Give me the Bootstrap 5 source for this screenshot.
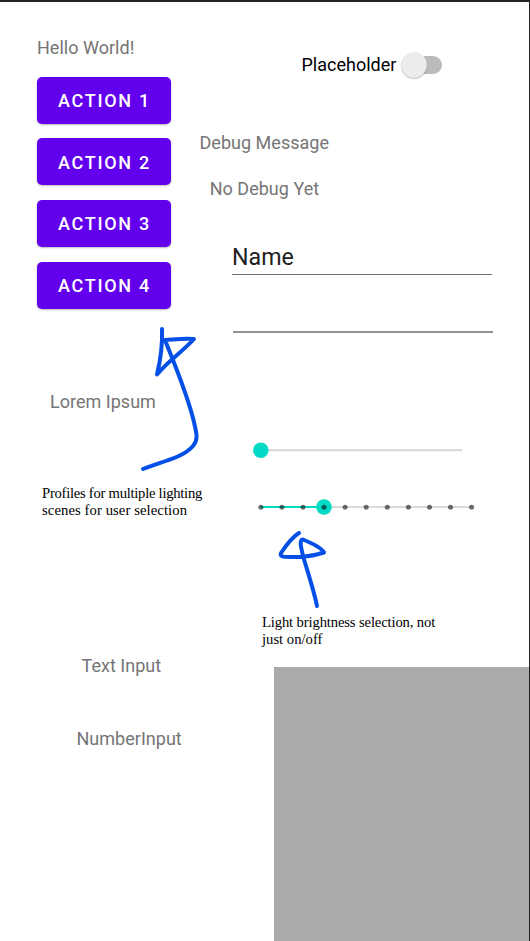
<!DOCTYPE html>
<html lang="en">
<head>
<meta charset="utf-8">
<meta name="viewport" content="width=device-width, initial-scale=1">
<title>Lighting control</title>
<link href="https://cdn.jsdelivr.net/npm/bootstrap@5.3.0/dist/css/bootstrap.min.css" rel="stylesheet">
<style>
body { background: #fff; font-family: Roboto, sans-serif; }
.screen { width: 530px; height: 941px; border-top: 2px solid #222; border-right: 1px solid #222; }
.side { width: 200px; flex: none; padding: 34px 0 0 37px; }
.main { padding-top: 50px; min-width: 0; }
.label { font-size: 18px; line-height: 24px; letter-spacing: .02px; color: #757575; white-space: nowrap; }
.actions { margin-top: 16.500px; gap: 14.700px; width: 134px; }
.btn-action { --bs-btn-color: #fff; --bs-btn-bg: #6200ee; --bs-btn-hover-bg: #5400d0; --bs-btn-hover-color: #fff;
  height: 47px; border: 0; border-radius: 5px; font-size: 18px; font-weight: 500; letter-spacing: 1.700px; line-height: 24px;
  padding: 8px 0 6px 1px; box-shadow: 0 1px 2px rgba(0,0,0,.28); white-space: nowrap; }
.lorem { margin: 81px 0 0 13px; }
.note { font-family: "Liberation Serif", serif; font-size: 14.670px; line-height: 17px; color: #000; white-space: nowrap; }
.note-profiles { margin: 71px 0 0 5px; }
.tight { letter-spacing: -.270px; }
.snug { letter-spacing: -.140px; }
.loose { letter-spacing: .090px; }
.text-in { margin: 135px 0 0 44.500px; }
.number-in { margin: 49px 0 0 39.500px; }
.toggle-row { margin-left: 101.500px; height: 26px; gap: 5px; }
.toggle-row .label { color: #000; letter-spacing: 0; }
.debug { margin-top: 53px; margin-left: -.500px; }
.nodebug { margin: 22px 0 0 9.700px; }
.field { width: 260px; border-bottom: 1px solid #707070; font-size: 23.200px; line-height: 32px; color: #212121; }
.field-name { margin: 40px 0 0 32px; height: 34px; }
.field-empty { margin: 29px 0 0 33px; height: 29px; border-bottom: 2px solid #929292; }
.sliders { display: block; margin: 108px 0 0 50px; }
.note-light { margin: 94px 0 0 62px; }
.panel { margin: 19px 0 0 74px; background: #aaa; }
.pen { left: 0; top: 0; pointer-events: none; }
</style>
</head>
<body>
<div class="screen position-relative d-flex overflow-hidden">
  <div class="side d-flex flex-column">
    <div class="label">Hello World!</div>
    <div class="actions d-flex flex-column">
      <button class="btn btn-action">ACTION 1</button>
      <button class="btn btn-action">ACTION 2</button>
      <button class="btn btn-action">ACTION 3</button>
      <button class="btn btn-action">ACTION 4</button>
    </div>
    <div class="label lorem">Lorem Ipsum</div>
    <div class="note note-profiles"><span class="tight">Profiles for multiple lighting</span><br><span class="loose">scenes for user selection</span></div>
    <div class="label text-in">Text Input</div>
    <div class="label number-in">NumberInput</div>
  </div>
  <div class="main d-flex flex-column flex-grow-1">
    <div class="toggle-row d-flex align-items-center">
      <span class="label">Placeholder</span>
      <svg width="44" height="30" viewBox="0 0 44 30" overflow="visible">
        <rect x="2" y="6" width="39" height="18" rx="9" fill="#bababa"/>
        <circle cx="13" cy="16" r="13.400" fill="#000" opacity=".09"/>
        <circle cx="13" cy="15.700" r="13" fill="#000" opacity=".12"/>
        <circle cx="13" cy="14.800" r="12.900" fill="#ececec"/>
      </svg>
    </div>
    <div class="label debug">Debug Message</div>
    <div class="label nodebug">No Debug Yet</div>
    <div class="field field-name">Name</div>
    <div class="field field-empty"></div>
    <svg class="sliders" width="232" height="79" viewBox="0 0 232 79">
      <path d="M11 9.200H212M74 66H221.500" stroke="#dadada" stroke-width="2.200"/>
      <circle cx="10.800" cy="9.300" r="7.800" fill="#03dac5"/>
      <path d="M11 66H74" stroke="#03dac5" stroke-width="2.200"/>
      <circle cx="74" cy="66" r="7.800" fill="#03dac5"/>
      <g fill="#000" fill-opacity=".56">
        <circle cx="10.800" cy="66.200" r="2.500"/><circle cx="31.900" cy="66.200" r="2.500"/><circle cx="53" cy="66.200" r="2.500"/>
        <circle cx="74.100" cy="66.200" r="2.500"/><circle cx="95.100" cy="66.200" r="2.500"/><circle cx="116.200" cy="66.200" r="2.500"/>
        <circle cx="137.300" cy="66.200" r="2.500"/><circle cx="158.400" cy="66.200" r="2.500"/><circle cx="179.500" cy="66.200" r="2.500"/>
        <circle cx="200.500" cy="66.200" r="2.500"/><circle cx="221.600" cy="66.200" r="2.500"/>
      </g>
    </svg>
    <div class="note note-light"><span class="snug">Light brightness selection, not</span><br>just on/off</div>
    <div class="panel flex-grow-1"></div>
  </div>
  <!-- Hand-drawn arrows laid over the screen -->
  <svg class="pen position-absolute" width="529" height="939" viewBox="0 2 529 939" fill="none" stroke="#0450e6" stroke-width="4" stroke-linecap="round" stroke-linejoin="round">
    <path d="M162 329C162.500 342 161 358 157 374.500C168 361 181 353 194 339C184 338 174 339.500 165 340C174 363 187 393 194 422C196 432 199 439 193 446C183 458 160 462 143 469"/>
    <path d="M299 533C292 537 285 547 281 553C279 558 287 557 295 557C306 557 316 555 324 552.500C321 547 309 542 303 539.500C299 540 301 547 303 556C308 573 314 591 317 606"/>
  </svg>
</div>
<script src="https://cdn.jsdelivr.net/npm/bootstrap@5.3.0/dist/js/bootstrap.bundle.min.js"></script>
</body>
</html>
